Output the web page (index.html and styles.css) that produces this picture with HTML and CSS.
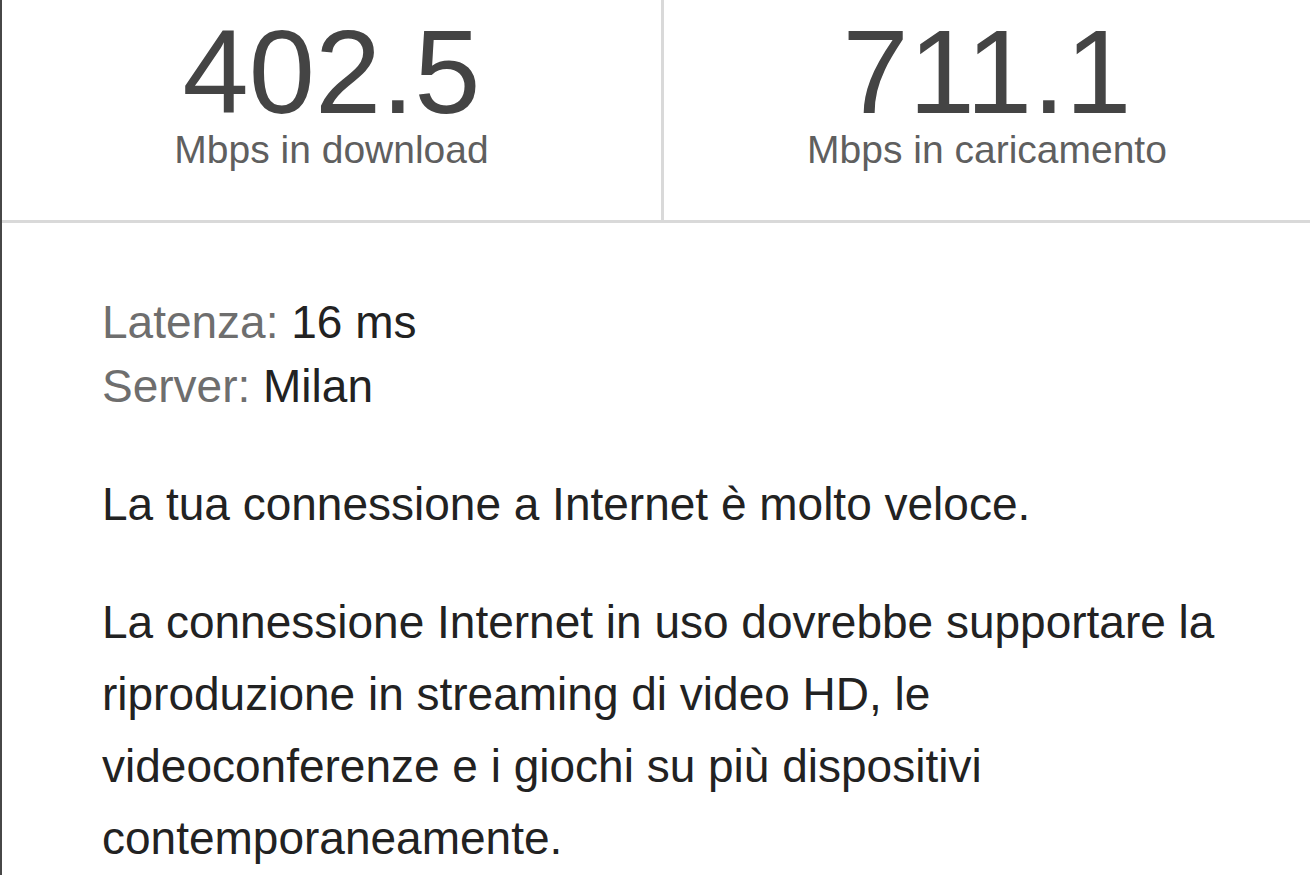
FILE: index.html
```html
<!DOCTYPE html>
<html lang="it">
<head>
<meta charset="utf-8">
<title>Speed test</title>
<link rel="stylesheet" href="styles.css">
</head>
<body>
<div class="card">
  <div class="stats">
    <div class="stat stat-left">
      <div class="value">402.5</div>
      <div class="unit">Mbps in download</div>
    </div>
    <div class="stat">
      <div class="value">711.1</div>
      <div class="unit">Mbps in caricamento</div>
    </div>
  </div>
  <div class="details">
    <div class="meta">
      <div><span class="key">Latenza:</span> 16 ms</div>
      <div><span class="key">Server:</span> Milan</div>
    </div>
    <p class="summary">La tua connessione a Internet è molto veloce.</p>
    <p class="desc">La connessione Internet in uso dovrebbe supportare la riproduzione in streaming di video HD, le videoconferenze e i giochi su più dispositivi contemporaneamente.</p>
  </div>
</div>
</body>
</html>
```
FILE: styles.css
```css
html, body {
  margin: 0;
  padding: 0;
  background: #ffffff;
}

body {
  font-family: "Liberation Sans", Arial, Helvetica, sans-serif;
  overflow: hidden;
}

.card {
  width: 1310px;
  height: 875px;
  box-sizing: border-box;
  border-left: 2px solid #474747;
  overflow: hidden;
}

.stats {
  display: grid;
  grid-template-columns: 662px 1fr;
  border-bottom: 3px solid #d9d9d9;
}

.stat {
  display: flex;
  flex-direction: column;
  align-items: center;
  padding: 12px 0 52px;
  white-space: nowrap;
}

.stat-left {
  border-right: 3px solid #d9d9d9;
}

.value {
  font-size: 119px;
  line-height: 119px;
  color: #444444;
}

.unit {
  font-size: 39px;
  line-height: 37px;
  color: #5f5f5f;
}

.details {
  padding: 67px 58px 0 100px;
  color: #222222;
  font-size: 46px;
}

.meta {
  line-height: 64px;
}

.key {
  color: #6e6e6e;
}

.details p {
  margin: 0;
  line-height: 72px;
}

.summary {
  margin-top: 50px !important;
}

.desc {
  margin-top: 46px !important;
}
```
